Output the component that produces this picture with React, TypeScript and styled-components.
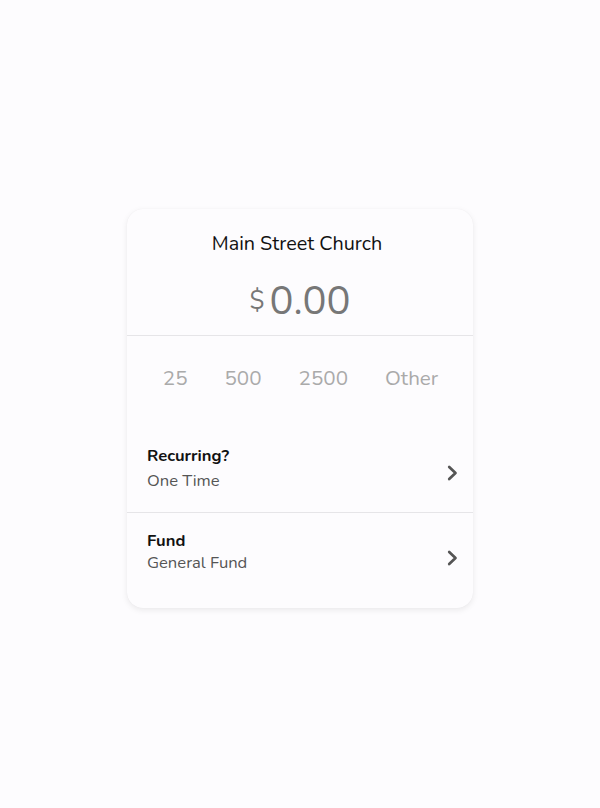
import React from "react";
import styled, { createGlobalStyle } from "styled-components";

const Global = createGlobalStyle`
  html, body { margin: 0; padding: 0; background: #fdfcfe; }
  body { font-family: "Nunito", "Lato", "Noto Sans", sans-serif; }
`;

const Page = styled.div`
  width: 600px;
  height: 808px;
  display: flex;
  justify-content: center;
  padding-top: 209px;
  box-sizing: border-box;
`;

const Card = styled.div`
  width: 346px;
  height: 399px;
  box-sizing: border-box;
  background: #fdfcfe;
  border-radius: 16px;
  box-shadow: 0 2px 6px rgba(0, 0, 0, 0.08), 0 0 1px rgba(0, 0, 0, 0.06);
  display: flex;
  flex-direction: column;
  overflow: hidden;
`;

const Header = styled.div`
  display: flex;
  flex-direction: column;
  align-items: center;
  padding-top: 21px;
  height: 127px;
  box-sizing: border-box;
  border-bottom: 1px solid #e6e5e8;
`;

const Title = styled.div`
  font-size: 19.8px;
  color: #111;
  line-height: 28px;
  margin-right: 6px;
`;

const Amount = styled.div`
  display: flex;
  align-items: flex-start;
  margin-top: 20px;
  color: #777;
`;

const Currency = styled.span`
  font-size: 25px;
  line-height: 30px;
  margin-right: 5px;
  margin-top: 8px;
`;

const Value = styled.span`
  font-size: 40px;
  line-height: 46px;
`;

const Presets = styled.div`
  display: flex;
  justify-content: center;
  gap: 37px;
  height: 84px;
  align-items: center;
  padding-left: 1px;
`;

const Preset = styled.span`
  font-size: 20.6px;
  color: #aaa;
`;

const Row = styled.div<{ $first?: boolean }>`
  display: flex;
  align-items: center;
  justify-content: space-between;
  padding: ${(p) => (p.$first ? "25px 14px 20px 20px" : "17px 14px 0 20px")};
  box-sizing: border-box;
  border-bottom: ${(p) => (p.$first ? "1px solid #e6e5e8" : "none")};
`;

const RowText = styled.div<{ $first?: boolean }>`
  display: flex;
  flex-direction: column;
  gap: ${(p) => (p.$first ? "3px" : "0")};
`;

const Label = styled.span`
  font-size: 16.6px;
  font-weight: 700;
  color: #111;
  line-height: 22px;
`;

const Sub = styled.span`
  font-size: 16.6px;
  color: #555;
  line-height: 22px;
`;

const ChevronBox = styled.svg<{ $offset: number }>`
  margin-top: ${(p) => p.$offset}px;
  flex: none;
`;

const Chevron = ({ offset }: { offset: number }) => (
  <ChevronBox $offset={offset} width="12" height="16" viewBox="0 0 12 16">
    <path d="M2.2 2 L8.5 8 L2.2 14" fill="none" stroke="#555" strokeWidth="2.7" strokeLinecap="round" strokeLinejoin="round" />
  </ChevronBox>
);

export default function App() {
  return (
    <>
      <Global />
      <Page>
        <Card>
          <Header>
            <Title>Main Street Church</Title>
            <Amount>
              <Currency>$</Currency>
              <Value>0.00</Value>
            </Amount>
          </Header>
          <Presets>
            <Preset>25</Preset>
            <Preset>500</Preset>
            <Preset>2500</Preset>
            <Preset>Other</Preset>
          </Presets>
          <Row $first>
            <RowText $first>
              <Label>Recurring?</Label>
              <Sub>One Time</Sub>
            </RowText>
            <Chevron offset={8} />
          </Row>
          <Row>
            <RowText>
              <Label>Fund</Label>
              <Sub>General Fund</Sub>
            </RowText>
            <Chevron offset={11} />
          </Row>
        </Card>
      </Page>
    </>
  );
}
